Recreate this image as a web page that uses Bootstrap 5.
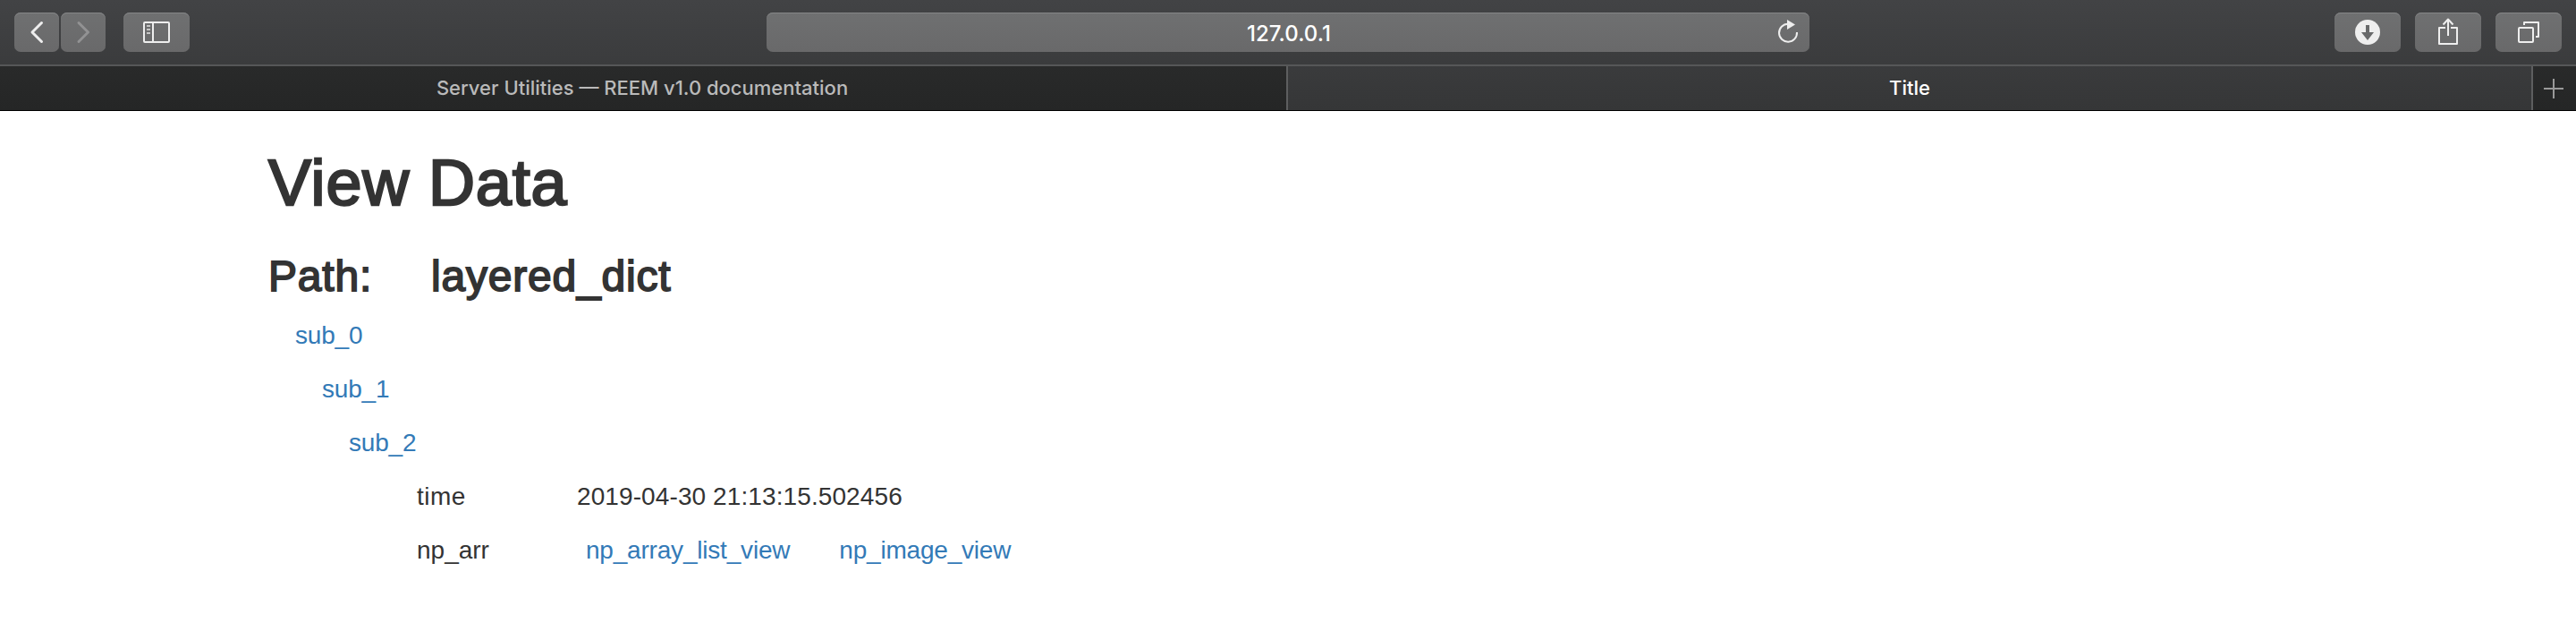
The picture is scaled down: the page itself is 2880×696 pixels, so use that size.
<!DOCTYPE html>
<html lang="en">
<head>
<meta charset="utf-8">
<title>Title</title>
<link href="https://cdn.jsdelivr.net/npm/bootstrap@5.3.0/dist/css/bootstrap.min.css" rel="stylesheet">
<style>
body{font-family:"Liberation Sans",Arial,sans-serif;font-size:28px;line-height:60px;color:#333;background:#fff;overflow:hidden}
.chrome{height:124px;background:linear-gradient(#424345,#353637);border-bottom:1px solid #000;font-family:Inter,sans-serif;font-weight:500}
.toolbar{height:74px;padding:14px 16px 0;border-bottom:2px solid #565758}
.tool,.address{height:44px;border-radius:7px;background:linear-gradient(#6f7071,#69696a);box-shadow:inset 0 1px #858687}
.tool{width:74px;border:0;padding:0;flex-shrink:0}
.tool-nav{width:50px}
.tool-forward{margin-left:2px}
.tool-sidebar{margin-left:20px}
.address{width:1166px;margin-left:645px;margin-right:587px;color:#fff;font-size:24px}
.address-text{letter-spacing:.05px;padding-top:3px;padding-left:2px}
.tabs{height:49px;font-size:22px}
.tab-back,.tab-front{padding-bottom:2px}
.tab-back{width:1438px;padding-right:2px;background:linear-gradient(#292a2a,#252626);color:#bababa}
.tab-front{width:1394px;border-left:2px solid #5d5e5f;border-right:2px solid #5d5e5f;color:#fff}
.tab-add{width:48px;background:linear-gradient(#292a2a,#252626)}
.page{padding:40px 0 0 300px}
.page h1{font-size:72px;line-height:80px;margin:0 0 35px;-webkit-text-stroke:2.4px #333;font-weight:400;letter-spacing:.85px}
.page h2{font-size:48px;line-height:60px;margin:0 0 6px;-webkit-text-stroke:1.8px #333;font-weight:400;letter-spacing:.8px}
.path-label{width:182px}
.page a{color:#337ab7;text-decoration:none;letter-spacing:-.2px}
.branch{padding-left:30px}
.leaf{padding-left:76px}
.key{width:179px}
.key-time{letter-spacing:.5px}
.stamp{letter-spacing:.1px}
.list-link{margin-left:10px}
.image-link{margin-left:55px}
</style>
</head>
<body>
<header class="chrome">
  <div class="toolbar d-flex">
    <button class="tool tool-nav" aria-label="Back"><svg class="d-block" width="50" height="44" fill="none" stroke="#eee" stroke-width="3" stroke-linecap="round" stroke-linejoin="round"><path d="M30.500 11.500L20 22L30.500 32.500"/></svg></button>
    <button class="tool tool-nav tool-forward" aria-label="Forward"><svg class="d-block" width="50" height="44" fill="none" stroke="#929293" stroke-width="3" stroke-linecap="round" stroke-linejoin="round"><path d="M20 11.500L30.500 22L20 32.500"/></svg></button>
    <button class="tool tool-sidebar" aria-label="Sidebar"><svg class="d-block" width="74" height="44" fill="none" stroke="#eee" stroke-width="2"><rect x="23" y="11" width="28" height="22" rx="1"/><path d="M33 11V33"/><path stroke="#c6c6c6" d="M26 15H30M26 19H30M26 23H30"/></svg></button>
    <div class="address d-flex align-items-center flex-shrink-0 position-relative">
      <span class="address-text flex-fill text-center">127.0.0.1</span>
      <svg class="position-absolute end-0 top-0" width="48" height="44"><path d="M24 12.700A10 10 0 1 0 34 22" fill="none" stroke="#eee" stroke-width="2"/><path d="M23 8L32 13.500L23 19Z" fill="#eee"/></svg>
    </div>
    <div class="d-flex gap-3 flex-shrink-0">
      <button class="tool" aria-label="Downloads"><svg class="d-block" width="74" height="44"><circle cx="37" cy="22" r="14" fill="#eee"/><path d="M35 14H39V22H44L37 31L30 22H35Z" fill="#68696a"/></svg></button>
      <button class="tool" aria-label="Share"><svg class="d-block" width="74" height="44" fill="none" stroke="#eee" stroke-width="2" stroke-linejoin="round"><path d="M34 17H27V35H47V17H40M37 26V8M31.500 13.500L37 7.500L42.500 13.500"/></svg></button>
      <button class="tool" aria-label="Tabs"><svg class="d-block" width="74" height="44" fill="none" stroke="#eee" stroke-width="2" stroke-linejoin="round"><rect x="26" y="17" width="16" height="16" rx="1"/><path d="M32 14V11H48V27H45"/></svg></button>
    </div>
  </div>
  <div class="tabs d-flex">
    <div class="tab-back d-flex align-items-center justify-content-center">Server Utilities — REEM v1.0 documentation</div>
    <div class="tab-front d-flex align-items-center justify-content-center">Title</div>
    <div class="tab-add"><svg class="d-block" width="48" height="49" stroke="#999" stroke-width="2"><path d="M12 25H34M23 14V36"/></svg></div>
  </div>
</header>
<main class="page">
  <h1>View Data</h1>
  <h2 class="d-flex"><span class="path-label">Path:</span><span class="path-value">layered_dict</span></h2>
  <div class="branch"><a href="#">sub_0</a>
    <div class="branch"><a href="#">sub_1</a>
      <div class="branch"><a href="#">sub_2</a>
        <div class="leaf d-flex"><span class="key key-time">time</span><span class="stamp">2019-04-30 21:13:15.502456</span></div>
        <div class="leaf d-flex"><span class="key">np_arr</span><a class="list-link" href="#">np_array_list_view</a><a class="image-link" href="#">np_image_view</a></div>
      </div>
    </div>
  </div>
</main>
<script src="https://cdn.jsdelivr.net/npm/bootstrap@5.3.0/dist/js/bootstrap.bundle.min.js"></script>
</body>
</html>
